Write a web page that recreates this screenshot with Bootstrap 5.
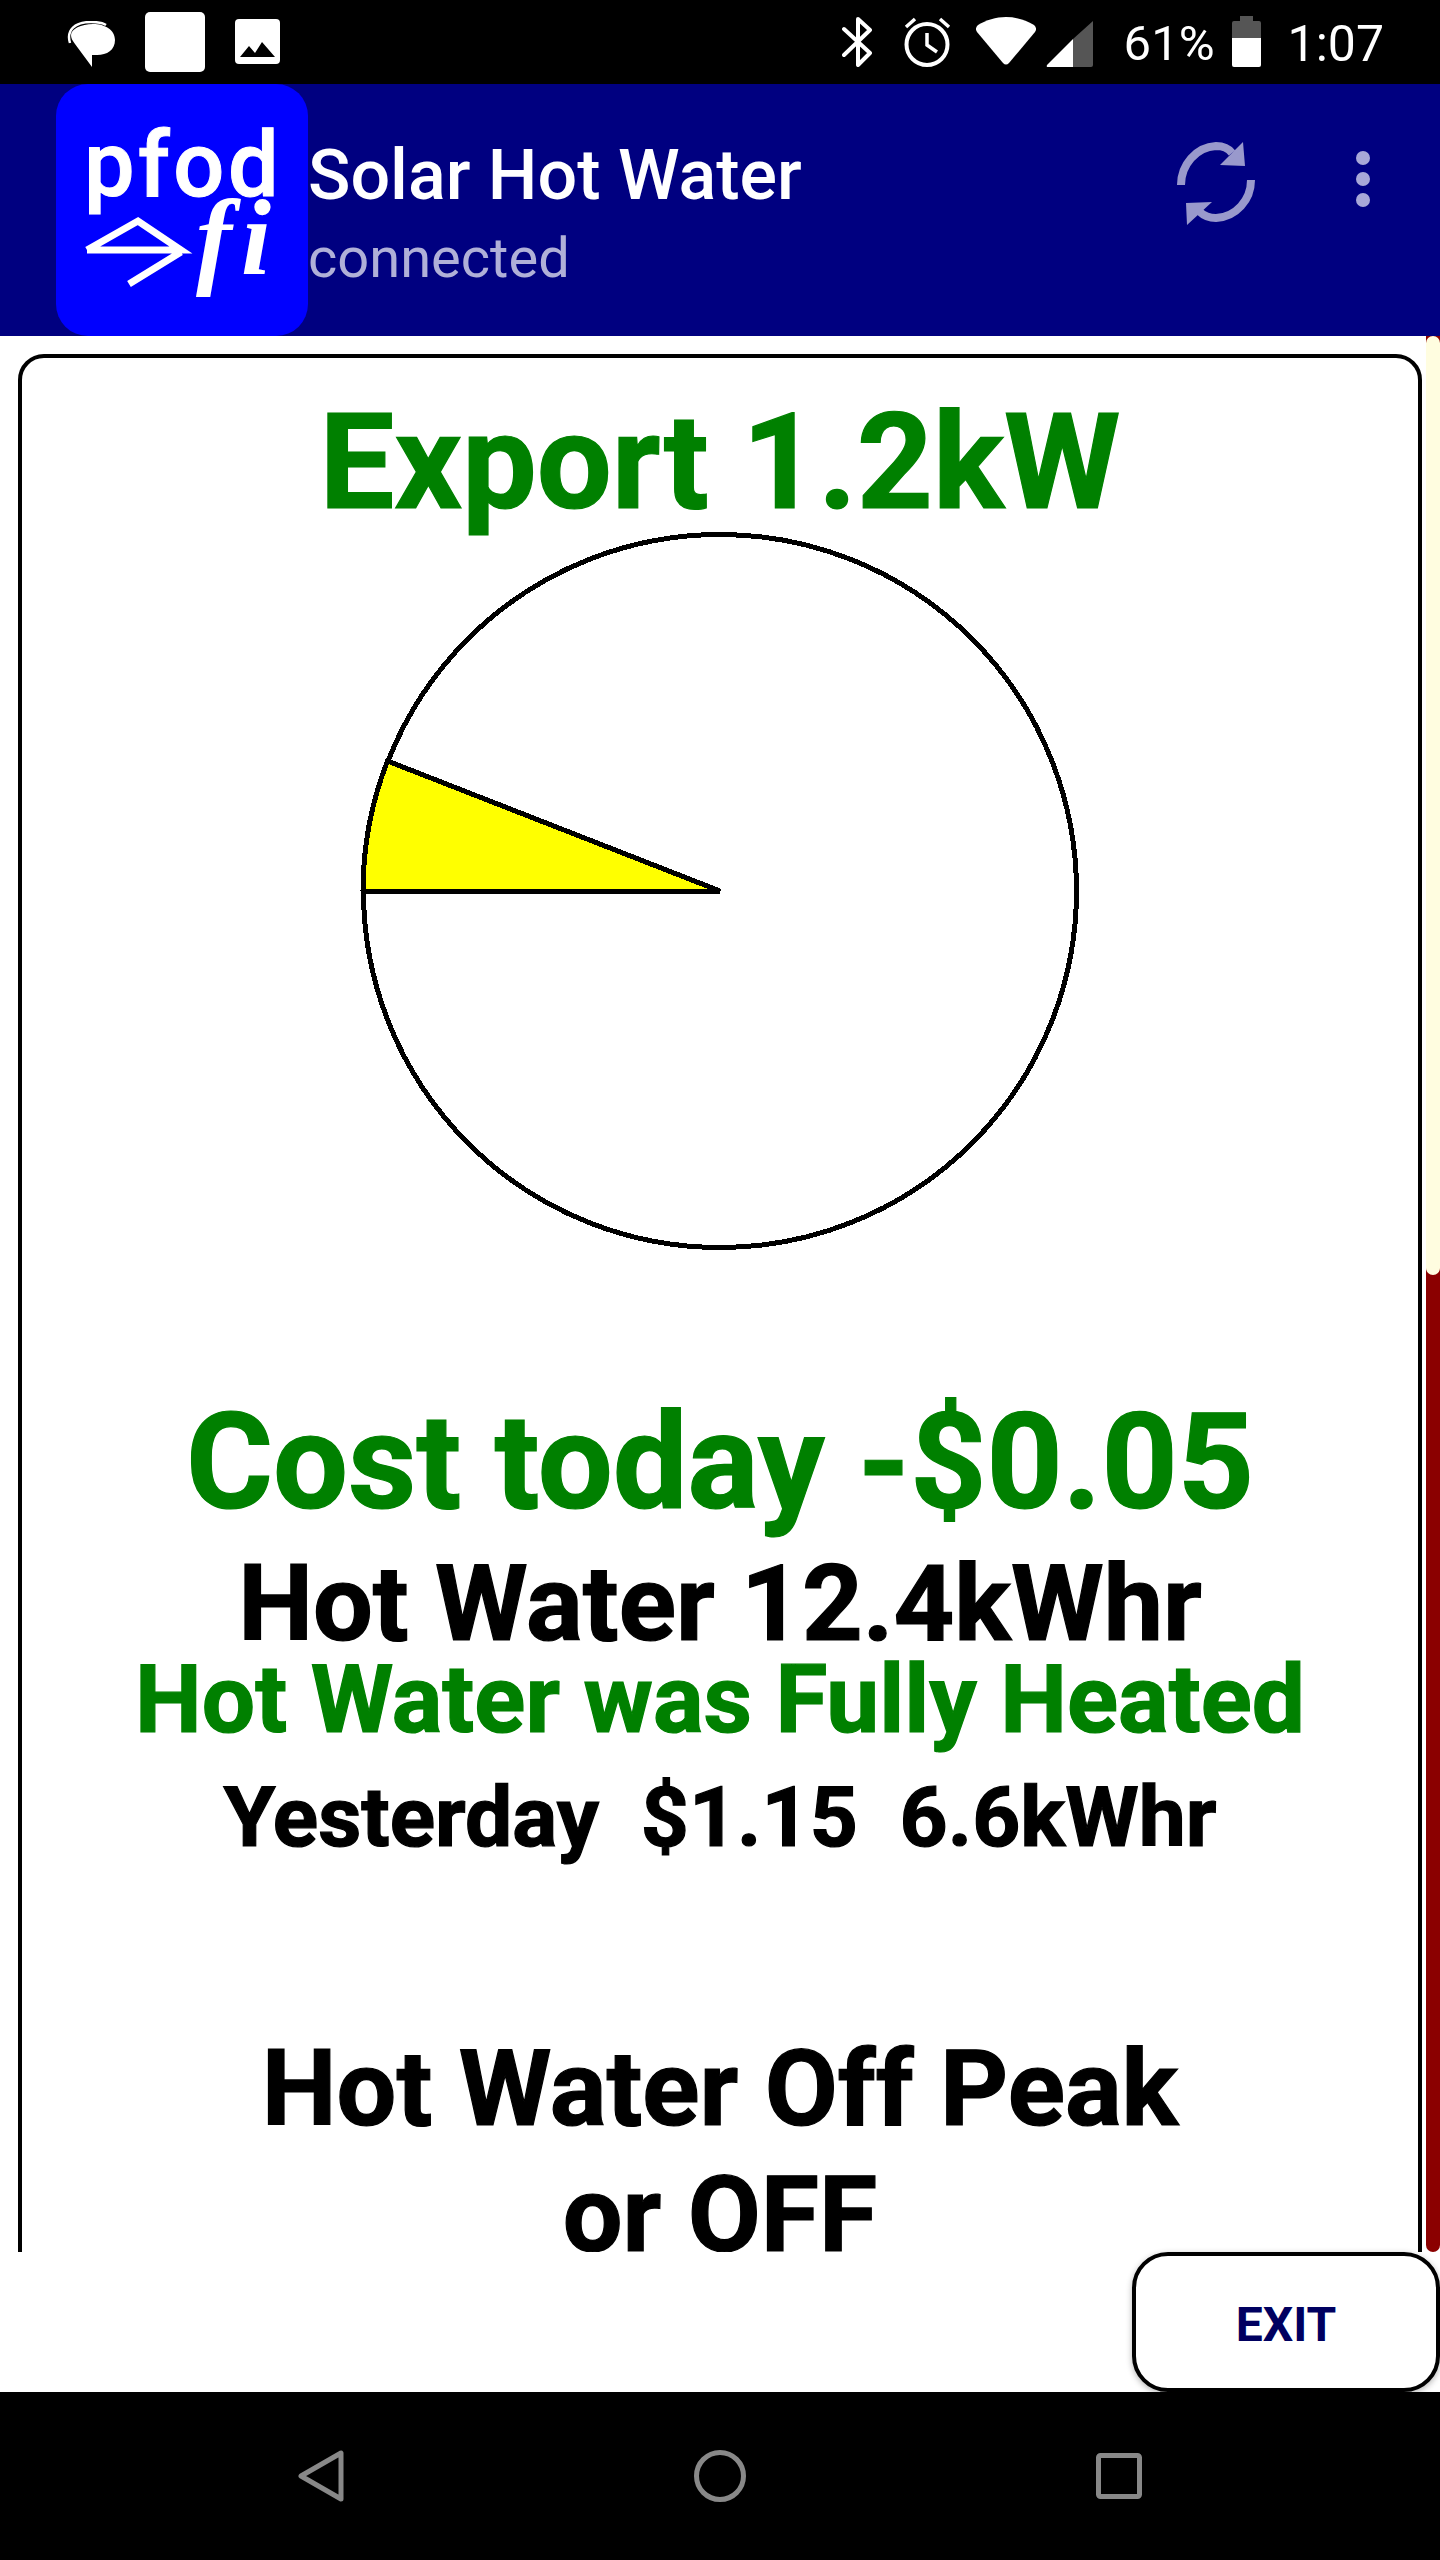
<!DOCTYPE html>
<html lang="en">
<head>
<meta charset="utf-8">
<title>Solar Hot Water</title>
<link href="https://cdn.jsdelivr.net/npm/bootstrap@5.3.0/dist/css/bootstrap.min.css" rel="stylesheet">
<style>
html,body{background:#fff;margin:0;}
body{font-family:Roboto,"Liberation Sans",sans-serif;}
.screen{width:1440px;height:2560px;overflow:hidden;}
.statusbar{height:84px;background:#000;color:#fff;flex:none;}
.status-left{padding-left:67px;}
.status-right{padding-right:56px;}
.ic-bubble{margin-top:21px;}
.ic-page{margin-top:12px;margin-left:28px;}
.ic-photo{margin-top:19px;margin-left:30px;}
.ic-bt{margin-top:17px;}
.ic-alarm{margin-top:17px;margin-left:32px;}
.ic-wifi{margin-top:17px;margin-left:25px;}
.ic-signal{margin-top:20px;margin-left:10px;}
.ic-batt{margin-top:16px;margin-left:17px;}
.status-txt{font-size:49px;line-height:88px;}
.pct-txt{margin-left:31px;}
.time-txt{margin-left:27px;font-size:50px;}
.appbar{height:252px;background:#000080;flex:none;}
.logo{width:252px;height:252px;margin-left:56px;background:#0000ff;border-radius:32px;flex:none;padding:37px 0 0 28px;color:#fff;}
.logo-a{font-size:90px;line-height:90px;font-weight:500;letter-spacing:3.5px;-webkit-text-stroke:1px #fff;}
.logo-row{margin-top:-23px;margin-left:-28px;}
.logo-b{font-size:108px;line-height:108px;font-style:italic;font-family:"Liberation Serif",serif;font-weight:700;letter-spacing:9px;margin-left:0;margin-top:-4px;}
.titlewrap{padding:56px 0 0 0;}
.apptitle{font-size:70px;line-height:70px;color:#fff;font-weight:500;white-space:nowrap;}
.appsub{font-size:56px;line-height:56px;color:#b0b0d8;margin-top:20px;}
.sync{margin-top:56px;}
.dots{margin:67px 70px 0 100px;}
.mainarea{height:1916px;overflow:hidden;position:relative;flex:none;}
.panel{margin:18px 18px 0 18px;height:2400px;border:4px solid #000;border-radius:26px;text-align:center;font-weight:700;-webkit-text-stroke:1.2px currentColor;}
.thumb-track{position:absolute;right:0;top:0;width:14px;height:100%;background:#8b0000;border-radius:0 0 10px 10px;}
.thumb{height:939px;background:#fffde0;border-radius:10px;}
.line{white-space:nowrap;}
.l1{font-size:133px;line-height:133px;color:#008000;margin-top:38px;}
.pie{display:block;margin:2px auto 0;}
.l2{font-size:133px;line-height:133px;color:#008000;margin-top:145px;}
.l3{font-size:106px;line-height:95px;color:#000;margin-top:28px;}
.l4{font-size:94.5px;line-height:95px;color:#008000;}
.l5{font-size:84px;line-height:84px;color:#000;margin-top:29px;}
.l6{font-size:106px;line-height:126px;color:#000;margin-top:166px;}
.footbar{height:140px;background:#fff;flex:none;}
.exitbtn{width:308px;height:140px;background:#fff;border:4px solid #000;border-radius:36px;color:#000060;font-size:48px;font-weight:700;padding:5px 0 0;box-shadow:0 2px 6px rgba(0,0,0,.3);}
.navbottom{height:168px;background:#000;gap:350px;flex:1;}
</style>
</head>
<body>
<div class="screen d-flex flex-column">
  <div class="statusbar d-flex justify-content-between align-items-start">
    <div class="status-left d-flex align-items-start">
      <svg class="ic-bubble" width="50" height="47" viewBox="0 0 50 47"><path d="M3 22C-1 9 8 1 24 1c7 0 12 1 15 3" fill="none" stroke="#fff" stroke-width="2.5"/><path d="M26 3c12 0 22 6 22 16s-8 15-18 15h-5v12L8 23c-3-4-4-6-4-9C4 8 14 3 26 3z" fill="#fff"/></svg>
      <svg class="ic-page" width="60" height="60" viewBox="0 0 60 60"><rect width="60" height="60" rx="5" fill="#fff"/></svg>
      <svg class="ic-photo" width="45" height="45" viewBox="0 0 45 45"><rect width="45" height="45" rx="4" fill="#fff"/><path d="M5 38l9-11 6 7 7-11 13 15z" fill="#000"/></svg>
    </div>
    <div class="status-right d-flex align-items-start">
      <svg class="ic-bt" width="30" height="50" viewBox="0 0 30 50"><path d="M2 12l26 24-12 12V2l12 11L2 38" fill="none" stroke="#fff" stroke-width="4" stroke-linecap="round" stroke-linejoin="round"/></svg>
      <svg class="ic-alarm" width="47" height="50" viewBox="0 0 47 50"><circle cx="23" cy="27.5" r="20.5" fill="none" stroke="#fff" stroke-width="4"/><path d="M23 16v12l10 7M2 10l9-8M45 10l-9-8" fill="none" stroke="#fff" stroke-width="3.5"/></svg>
      <svg class="ic-wifi" width="60" height="48" viewBox="0 0 60 48"><path d="M1 15c-2-3-1-5 1-7C10 3 20 0 30 0s20 3 28 8c2 2 3 4 1 7L33 46q-3 3-6 0z" fill="#fff"/></svg>
      <svg class="ic-signal" width="47" height="47" viewBox="0 0 47 47"><path d="M47 1v44q0 2-2 2H27V19z" fill="#555"/><path d="M27 19v28H2q-2 0-1-2z" fill="#fff"/></svg>
      <span class="status-txt pct-txt">61%</span>
      <svg class="ic-batt" width="29" height="51" viewBox="0 0 29 51"><path d="M8 0h13v5h6q2 0 2 2v15H0V7q0-2 2-2h6z" fill="#555"/><path d="M0 22h29v27q0 2-2 2H2q-2 0-2-2z" fill="#fff"/></svg>
      <span class="status-txt time-txt">1:07</span>
    </div>
  </div>
  <div class="appbar d-flex align-items-start">
    <div class="logo">
      <div class="logo-a">pfod</div>
      <div class="logo-row d-flex align-items-start">
        <svg width="140" height="110" viewBox="0 104 140 110"><path d="M31 166l51-29 43 29H31M125 168l-52 32" fill="none" stroke="#fff" stroke-width="7"/></svg>
        <div class="logo-b">fi</div>
      </div>
    </div>
    <div class="titlewrap">
      <div class="apptitle">Solar Hot Water</div>
      <div class="appsub">connected</div>
    </div>
    <svg class="sync ms-auto" width="80" height="86" viewBox="0 0 80 86"><path d="M5 45C5 25 20 7 40 6c7 0 13 3 16 7M75 40c0 20-15 37-35 38-7 0-13-3-16-6" fill="none" stroke="#9999cc" stroke-width="8"/><path d="M67 2l2 24-25-1zM11 85l-1-22 26-1z" fill="#9999cc"/></svg>
    <svg class="dots" width="14" height="56" viewBox="0 0 14 56"><circle cx="7" cy="7" r="7" fill="#a8a8d8"/><circle cx="7" cy="28" r="7" fill="#a8a8d8"/><circle cx="7" cy="49" r="7" fill="#a8a8d8"/></svg>
  </div>
  <div class="mainarea">
    <div class="panel">
      <div class="line l1">Export 1.2kW</div>
      <svg class="pie" width="720" height="720" viewBox="0 0 720 720" shape-rendering="crispEdges"><circle cx="360" cy="360" r="356.5" fill="#fff" stroke="#000" stroke-width="5"/><path d="M360 360H3A357 357 0 0 1 27.5 230Z" fill="#ff0" stroke="#000" stroke-width="5"/></svg>
      <div class="line l2">Cost today -$0.05</div>
      <div class="line l3">Hot Water 12.4kWhr</div>
      <div class="line l4">Hot Water was Fully Heated</div>
      <div class="line l5">Yesterday&nbsp; $1.15&nbsp; 6.6kWhr</div>
      <div class="l6">Hot Water Off Peak<br>or OFF</div>
    </div>
    <div class="thumb-track"><div class="thumb"></div></div>
  </div>
  <div class="footbar d-flex justify-content-end"><button class="exitbtn" type="button">EXIT</button></div>
  <div class="navbottom d-flex justify-content-center align-items-center">
    <svg width="46" height="52" viewBox="0 0 46 52"><path d="M43 3v46L3 26z" fill="none" stroke="#888" stroke-width="5" stroke-linejoin="round"/></svg>
    <svg width="52" height="52" viewBox="0 0 52 52"><circle cx="26" cy="26" r="23.5" fill="none" stroke="#888" stroke-width="5"/></svg>
    <svg width="46" height="46" viewBox="0 0 46 46"><rect x="2.5" y="2.5" width="41" height="41" rx="2" fill="none" stroke="#888" stroke-width="5"/></svg>
  </div>
</div>
<script src="https://cdn.jsdelivr.net/npm/bootstrap@5.3.0/dist/js/bootstrap.bundle.min.js"></script>
</body>
</html>
